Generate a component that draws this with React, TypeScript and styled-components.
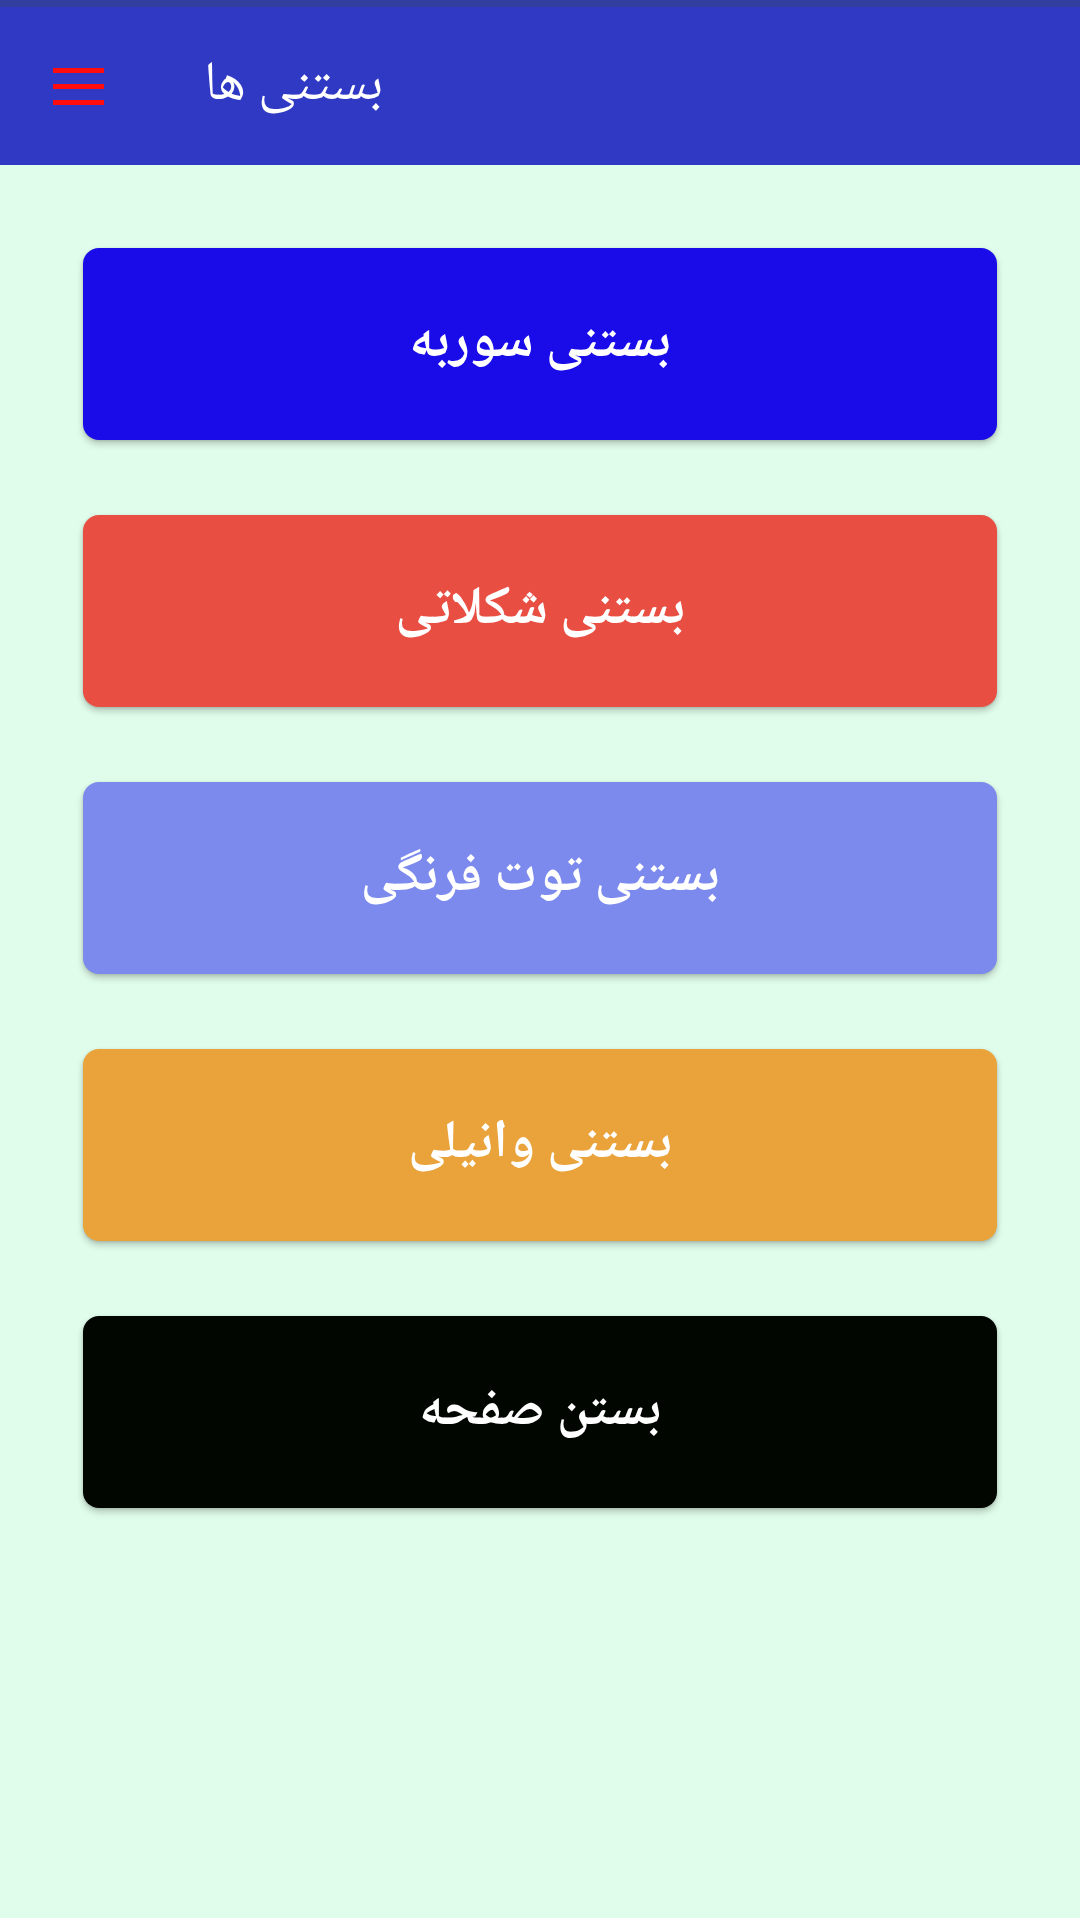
import React from "react";
import styled, { createGlobalStyle } from "styled-components";

const Global = createGlobalStyle`
  html, body { margin: 0; padding: 0; }
  body { background: #e0fcea; font-family: "Noto Naskh Arabic", "Noto Sans Arabic", "DejaVu Sans", sans-serif; }
  #root { min-height: 1918px; }
`;

const Page = styled.div`
  width: 1080px;
  min-height: 1918px;
  background: #e0fcea;
  display: flex;
  flex-direction: column;
`;

const StatusBar = styled.div`
  height: 7px;
  background: #323f9e;
`;

const Toolbar = styled.header`
  height: 158px;
  background: #2f39c4;
  display: flex;
  align-items: center;
  padding-left: 53px;
  gap: 100px;
`;

const MenuButton = styled.div`
  width: 51px;
  height: 37px;
  display: flex;
  flex-direction: column;
  justify-content: space-between;
`;

const Bar = styled.span`
  display: block;
  height: 5px;
  background: #ff0d0d;
`;

const Title = styled.h1`
  margin: 0;
  font-family: "Noto Naskh Arabic", "Noto Sans Arabic", "DejaVu Sans", sans-serif;
  font-weight: normal;
  font-size: 55px;
  color: #ffffff;
  direction: rtl;
  line-height: 1;
  padding-top: 2px;
`;

const List = styled.main`
  display: flex;
  flex-direction: column;
  gap: 75px;
  padding: 83px 83px 0 83px;
`;

const Flavor = styled.button<{ $bg: string }>`
  height: 192px;
  width: 914px;
  border: none;
  border-radius: 16px;
  background: ${(p) => p.$bg};
  box-shadow: 0 4px 7px rgba(0, 0, 0, 0.2), 0 1px 3px rgba(0, 0, 0, 0.12);
  color: #ffffff;
  font-family: "Noto Naskh Arabic", "Noto Sans Arabic", "DejaVu Sans", sans-serif;
  font-weight: bold;
  font-size: 54px;
  line-height: 1.2;
  direction: rtl;
  display: flex;
  align-items: center;
  justify-content: center;
  padding: 0;
  cursor: pointer;
`;

const items = [
  { label: "بستنی سوربه", bg: "#1a0ce8" },
  { label: "بستنی شکلاتی", bg: "#e94e43" },
  { label: "بستنی توت فرنگی", bg: "#7b8aec" },
  { label: "بستنی وانیلی", bg: "#eaa33b" },
  { label: "بستن صفحه", bg: "#020600" },
];

export default function App() {
  return (
    <Page>
      <Global />
      <StatusBar />
      <Toolbar>
        <MenuButton>
          <Bar />
          <Bar />
          <Bar />
        </MenuButton>
        <Title>بستنی ها</Title>
      </Toolbar>
      <List>
        {items.map((it) => (
          <Flavor key={it.label} $bg={it.bg}>
            {it.label}
          </Flavor>
        ))}
      </List>
    </Page>
  );
}
